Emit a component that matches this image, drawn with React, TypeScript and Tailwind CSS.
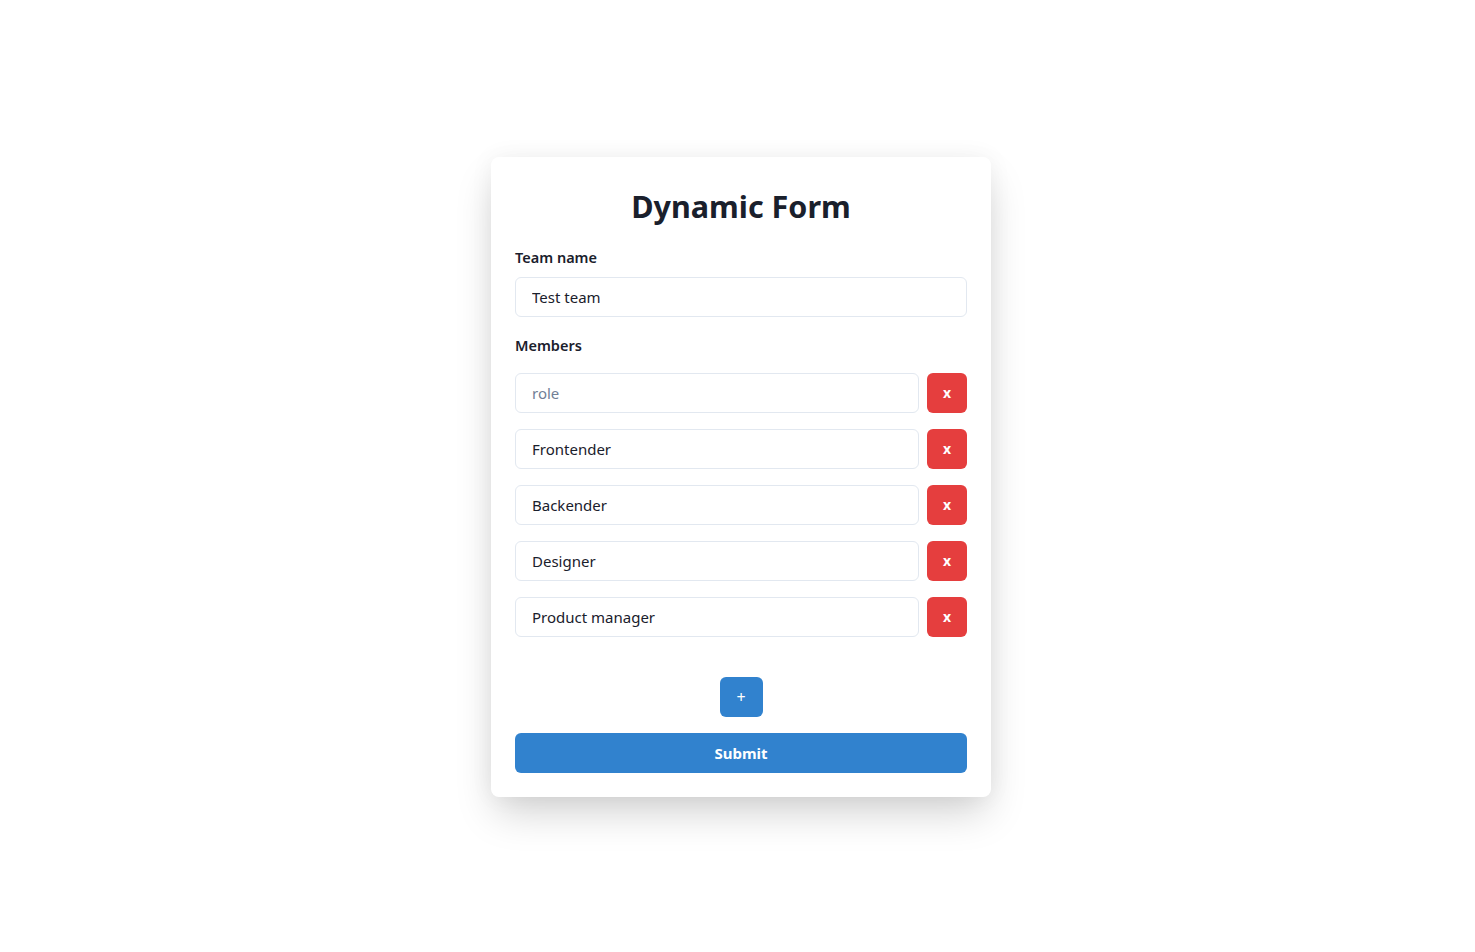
import React, { useState } from 'react';

const App: React.FC = () => {
  const [team, setTeam] = useState('Test team');
  const [members, setMembers] = useState<string[]>(['', 'Frontender', 'Backender', 'Designer', 'Product manager']);

  const update = (i: number, v: string) => setMembers(members.map((m, j) => (j === i ? v : m)));
  const remove = (i: number) => setMembers(members.filter((_, j) => j !== i));

  return (
    <div className="min-h-screen w-full bg-white flex items-center justify-center pl-[7px] pt-[2px] font-['Noto_Sans',sans-serif] text-[#1a202c]">
      <form
        className="w-[500px] bg-white rounded-lg shadow-[0_20px_40px_-5px_rgba(0,0,0,0.18),0_0_25px_rgba(0,0,0,0.05)] p-6 flex flex-col"
        onSubmit={(e) => e.preventDefault()}
      >
        <h1 className="pt-[2px] pb-[-2px] text-[30.5px] leading-[46px] font-bold text-center">Dynamic Form</h1>

        <label className="mt-[18px] text-[14.5px] leading-5 font-semibold">Team name</label>
        <input
          value={team}
          onChange={(e) => setTeam(e.target.value)}
          className="mt-[10px] h-10 w-full rounded-md border border-[#e2e8f0] px-4 text-[15px] outline-none"
        />

        <label className="mt-[18px] text-[14.5px] leading-5 font-semibold">Members</label>
        <div className="mt-[18px] flex flex-col gap-4">
          {members.map((m, i) => (
            <div key={i} className="flex gap-2">
              <input
                value={m}
                placeholder="role"
                onChange={(e) => update(i, e.target.value)}
                className="h-10 flex-1 rounded-md border border-[#e2e8f0] px-4 text-[15px] outline-none placeholder:text-[#718096]"
              />
              <button
                type="button"
                onClick={() => remove(i)}
                className="h-10 w-10 rounded-md bg-[#e53e3e] text-white text-sm font-bold"
              >
                x
              </button>
            </div>
          ))}
        </div>

        <div className="mt-10 flex justify-center">
          <button
            type="button"
            onClick={() => setMembers([...members, ''])}
            className="h-10 w-[43px] rounded-md bg-[#3182ce] text-white text-base"
          >
            +
          </button>
        </div>

        <button type="submit" className="mt-4 h-10 w-full rounded-md bg-[#3182ce] text-white text-[15px] font-bold">
          Submit
        </button>
      </form>
    </div>
  );
};

export default App;
